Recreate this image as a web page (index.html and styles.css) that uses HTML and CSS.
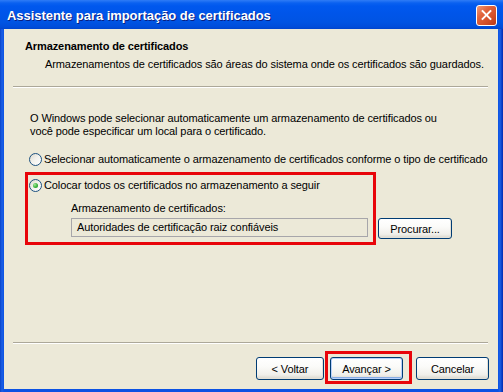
FILE: index.html
```html
<!DOCTYPE html>
<html lang="pt">
<head>
<meta charset="utf-8">
<title>Assistente para importação de certificados</title>
<link rel="stylesheet" href="styles.css">
</head>
<body>
<div class="window">
  <div class="titlebar">
    <span class="title">Assistente para importação de certificados</span>
    <span class="close" aria-label="Fechar"></span>
  </div>
  <div class="client">
    <div class="header">
      <div class="h-title">Armazenamento de certificados</div>
      <div class="h-sub">Armazenamentos de certificados são áreas do sistema onde os certificados são guardados.</div>
    </div>
    <div class="sep"></div>
    <div class="content">
      <p class="intro">O Windows pode selecionar automaticamente um armazenamento de certificados ou<br>você pode especificar um local para o certificado.</p>
      <div class="radio radio-first"><span class="dot"></span><span>Selecionar automaticamente o armazenamento de certificados conforme o tipo de certificado</span></div>
      <div class="store-row">
        <div class="mark">
          <div class="radio"><span class="dot checked"></span><span>Colocar todos os certificados no armazenamento a seguir</span></div>
          <div class="store-label">Armazenamento de certificados:</div>
          <div class="field">Autoridades de certificação raiz confiáveis</div>
        </div>
        <button class="btn btn-browse">Procurar...</button>
      </div>
    </div>
    <div class="footer">
      <div class="sep"></div>
      <div class="buttons">
        <button class="btn btn-back">&lt; Voltar</button>
        <div class="mark mark-next"><button class="btn btn-default">Avançar &gt;</button></div>
        <button class="btn btn-cancel">Cancelar</button>
      </div>
    </div>
  </div>
</div>
</body>
</html>
```

FILE: styles.css
```css
html, body {
  margin: 0;
  padding: 0;
}
body {
  width: 503px;
  height: 392px;
  overflow: hidden;
  font-family: "Liberation Sans", Arial, sans-serif;
  font-size: 11px;
  letter-spacing: -0.1px;
  color: #000;
}
.window {
  width: 503px;
  height: 392px;
  box-sizing: border-box;
  display: flex;
  flex-direction: column;
  background: linear-gradient(90deg, #0A43C8 0, #1B5FE6 2px, #0B52E3 4px, #0B52E3 498px, #1B5FE6 500px, #002AB0 503px);
  padding: 0 5px 3px 4px;
}
.titlebar {
  height: 29px;
  flex: none;
  margin: 0 -5px 0 -4px;
  padding: 0 6px 0 7px;
  display: flex;
  align-items: center;
  justify-content: space-between;
  background: linear-gradient(180deg, #2F7CF6 0, #0A61F0 3px, #0058EE 6px, #0055E9 14px, #0054E3 22px, #004DDA 27px, #0044CC 29px);
}
.title {
  color: #fff;
  font-family: "Liberation Sans", Arial, sans-serif;
  font-weight: bold;
  font-size: 13px;
  letter-spacing: -0.05px;
  text-shadow: 1px 1px 0 #0A1E80;
  padding-top: 1px;
}
.close {
  position: relative;
  display: block;
  width: 19px;
  height: 19px;
  margin-top: 2px;
  border: 1px solid #FFFFFF;
  border-radius: 3px;
  background: linear-gradient(135deg, #F09A78 0, #E2643C 35%, #D24E28 70%, #B83818 100%);
  flex: none;
}
.close::before,
.close::after {
  content: "";
  position: absolute;
  left: 3px;
  top: 8px;
  width: 13px;
  height: 2px;
  background: #FFFFFF;
  transform: rotate(45deg);
}
.close::after {
  transform: rotate(-45deg);
}
.client {
  flex: 1;
  background: #ECE9D8;
  display: flex;
  flex-direction: column;
}
.header {
  padding: 11px 0 0 21px;
}
.h-title {
  font-weight: bold;
  line-height: 13px;
}
.h-sub {
  margin-top: 5px;
  padding-left: 20px;
  line-height: 13px;
}
.sep {
  margin: 15px 10px 0 9px;
  height: 1px;
  border-top: 1px solid #ACA899;
  background: #fff;
}
.content {
  padding-left: 21px;
}
.intro {
  margin: 24px 0 0 5px;
  line-height: 13px;
}
.radio {
  display: flex;
  align-items: center;
  gap: 2px;
  line-height: 13px;
  height: 13px;
}
.radio-first {
  margin: 15px 0 0 4px;
}
.dot {
  width: 11px;
  height: 11px;
  border: 1px solid #1C5180;
  border-radius: 50%;
  background: linear-gradient(135deg, #DCD8CB 0, #F2F1EC 45%, #FFFFFF 100%);
  display: flex;
  align-items: center;
  justify-content: center;
  flex: none;
}
.dot.checked::after {
  content: "";
  width: 5px;
  height: 5px;
  border-radius: 50%;
  background: radial-gradient(circle at 35% 35%, #A6E89C 0, #3BB33B 55%, #1A8A1A 100%);
}
.store-row {
  display: flex;
  align-items: flex-end;
  margin-top: 6px;
}
.mark {
  border: 3px solid #E8050A;
}
.store-row .mark {
  width: 344px;
  padding: 4px 0 5px 1px;
}
.store-label {
  margin: 10px 0 0 42px;
  line-height: 13px;
}
.field {
  margin: 3px 0 0 42px;
  width: 297px;
  height: 19px;
  box-sizing: border-box;
  border: 1px solid #A7A6AA;
  background: #ECE9D8;
  padding: 0 0 0 5px;
  line-height: 17px;
}
.btn {
  font-family: "Liberation Sans", Arial, sans-serif;
  font-size: 11px;
  letter-spacing: -0.1px;
  color: #000;
  border: 1px solid #003C74;
  border-radius: 3px;
  background: linear-gradient(180deg, #FFFFFF 0, #FBFBF9 40%, #F0EFEA 80%, #D9D6CB 100%);
  box-shadow: inset -1px -1px 0 #E3E0D6;
  padding: 0;
  margin: 0;
}
.btn-browse {
  width: 74px;
  height: 21px;
  margin: 0 0 6px 2px;
}
.footer {
  margin-top: auto;
  padding-bottom: 5px;
}
.footer .sep {
  margin-top: 0;
}
.buttons {
  display: flex;
  align-items: flex-start;
  padding-top: 7px;
  padding-right: 9px;
  justify-content: flex-end;
}
.btn-back, .btn-cancel, .btn-default {
  width: 73px;
  height: 23px;
}
.btn-back {
  width: 68px;
  margin-top: 6px;
  margin-right: 1px;
}
.mark-next {
  padding: 3px 6px 1px 2px;
}
.btn-default {
  box-shadow: inset 0 0 0 1px #B9D1FA, inset 0 -1px 0 1px #89ADE4;
}
.btn-cancel {
  margin-top: 6px;
  margin-left: 4px;
}
```
